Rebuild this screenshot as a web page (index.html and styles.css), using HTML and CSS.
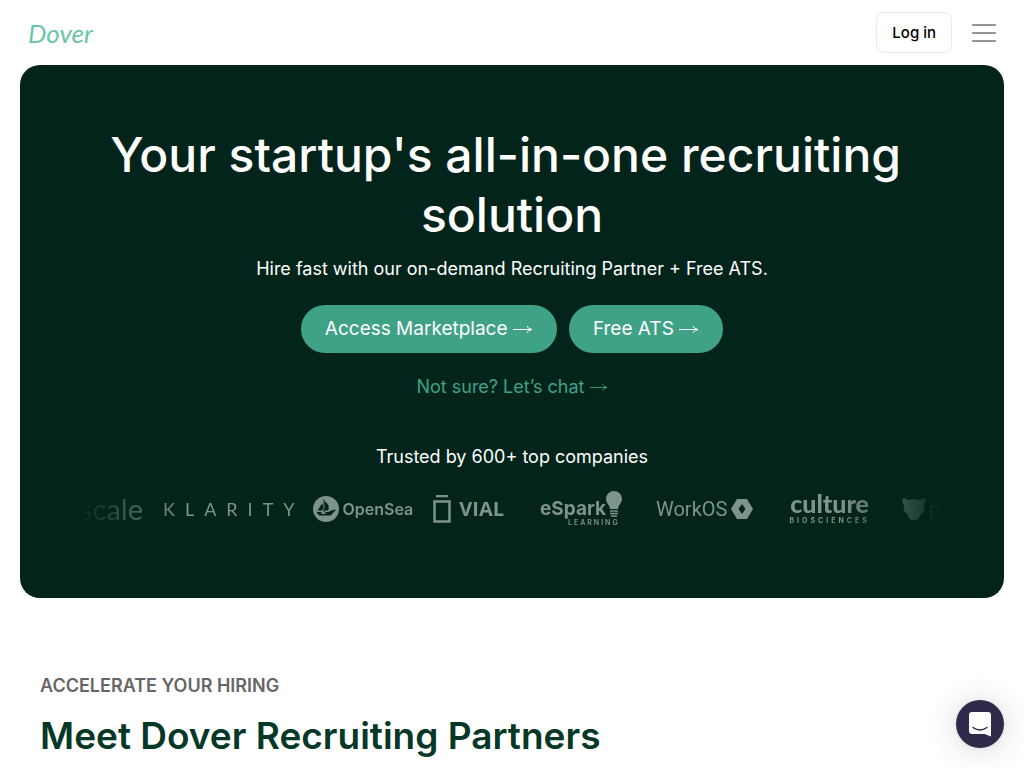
FILE: index.html
```html
<!DOCTYPE html>
<html lang="en">
<head>
    <meta charset="UTF-8">
    <meta name="viewport" content="width=device-width, initial-scale=1.0">
    <title>Dover</title>
    <link rel="stylesheet" href="styles.css">
</head>
<body>

    <header class="navbar">
        <a href="#" class="brand">Dover</a>
        <div class="nav-actions">
            <a href="#" class="login-button">Log in</a>
            <button class="menu-button" aria-label="Menu">
                <svg width="24" height="20" viewBox="0 0 24 20">
                    <path d="M0 2h24M0 10h24M0 18h24" stroke="#949494" stroke-width="2"></path>
                </svg>
            </button>
        </div>
    </header>

    <main>
        <section class="hero">
            <h1>Your startup's all-in-one recruiting&nbsp; solution</h1>
            <p class="hero-text">Hire fast with our on-demand Recruiting Partner + Free ATS.</p>
            <div class="hero-buttons">
                <a href="#" class="cta-button">Access Marketplace
                    <svg class="arrow" width="20" height="12" viewBox="0 0 20 12"><path d="M0 6.500h18M14 3q1 3 5 3.500q-4 .5-5 3.500"></path></svg>
                </a>
                <a href="#" class="cta-button">Free ATS
                    <svg class="arrow" width="20" height="12" viewBox="0 0 20 12"><path d="M0 6.500h18M14 3q1 3 5 3.500q-4 .5-5 3.500"></path></svg>
                </a>
            </div>
            <a href="#" class="chat-link">Not sure? Let’s chat
                <svg class="arrow" width="18" height="12" viewBox="0 0 20 12"><path d="M0 6.500h18M14 3q1 3 5 3.500q-4 .5-5 3.500"></path></svg>
            </a>

            <p class="trusted">Trusted by 600+ top companies</p>
            <div class="logos">
                <div class="logo scale">scale</div>
                <div class="logo klarity">KLARITY</div>
                <div class="logo opensea">
                    <svg width="26" height="26" viewBox="0 0 26 26">
                        <circle cx="13" cy="13" r="13" fill="currentColor"></circle>
                        <path d="M4.500 14.500 9 7.500q2 3.500.3 7zM11 5c4 2 6 5.500 4 9.500h-4q2-5 0-9.500zM3.500 16h5v2h4v-2h3l2-1.300 5-1.200v1.300l-1.800 1.200c-1.500 2.500-2.500 3.600-5 3.600H8.500c-3 0-5-2-5-5.600z" fill="#03241b"></path>
                        <path d="M11 3.500v13" stroke="#03241b" stroke-width="1"></path>
                    </svg>
                    <span>OpenSea</span>
                </div>
                <div class="logo vial">
                    <svg width="18" height="28" viewBox="0 0 18 28">
                        <path d="M3 1h12M1.500 6.500h15v20h-15z" fill="none" stroke="currentColor" stroke-width="2.500"></path>
                    </svg>
                    <span>VIAL</span>
                </div>
                <div class="logo espark">
                    <div class="espark-top">
                        <span class="espark-name">eSpark</span>
                        <svg width="16" height="27" viewBox="0 0 16 27">
                            <path d="M8 0a8 8 0 0 0-8 8c0 4 3.500 5.500 4 10h8c.5-4.500 4-6 4-10a8 8 0 0 0-8-8z" fill="currentColor"></path>
                            <path d="M4 20h8M4 22.500h8M5 25h6" stroke="currentColor" stroke-width="1.500"></path>
                        </svg>
                    </div>
                    <span class="espark-sub">LEARNING</span>
                </div>
                <div class="logo workos">
                    <span>WorkOS</span>
                    <svg width="22" height="20" viewBox="0 0 22 20">
                        <path d="M6 0h10l6 10-6 10H6L0 10zM11 5l-3.500 5 3.500 5 3.500-5z" fill="currentColor" fill-rule="evenodd"></path>
                    </svg>
                </div>
                <div class="logo culture">
                    <span class="culture-name">culture</span>
                    <span class="culture-sub">BIOSCIENCES</span>
                </div>
                <div class="logo bear">
                    <svg width="24" height="22" viewBox="0 0 24 22">
                        <path d="M1 5C-1 2 1-.5 3.500.5L6 2q6-1.500 12 0l2.500-1.500C23-.5 25 2 23 5l-1 2c.8 4 0 7-3 9-1.500 1-1 3-2.500 5-1 1.300-8 1.300-9 0C6 19 6.500 17 5 16c-3-2-3.800-5-3-9z" fill="currentColor"></path>
                    </svg>
                    <span>p</span>
                </div>
            </div>
        </section>

        <section class="partners">
            <p class="eyebrow">ACCELERATE YOUR HIRING</p>
            <h2>Meet Dover Recruiting Partners</h2>
        </section>
    </main>

    <button class="chat-button" aria-label="Open chat">
        <svg width="22" height="25" viewBox="0 0 22 25">
            <path d="M3 0h16a3 3 0 0 1 3 3v21.500L15.500 22H3a3 3 0 0 1-3-3V3a3 3 0 0 1 3-3z" fill="#fff"></path>
            <path d="M4 15.500q7 5 14 0" fill="none" stroke="#2d2a4a" stroke-width="1.500" stroke-linecap="round"></path>
        </svg>
    </button>

</body>
</html>
```
FILE: styles.css
```css
* {
    box-sizing: border-box;
}

body {
    margin: 0;
    font-family: Inter, Arial, sans-serif;
    background-color: #fff;
    color: #000;
}

h1, h2, p {
    margin: 0;
}

a {
    text-decoration: none;
}

/* Navbar */
.navbar {
    display: flex;
    justify-content: space-between;
    align-items: center;
    padding: 12px 28px;
}

.brand {
    font-family: Lato, sans-serif;
    font-size: 26px;
    font-style: italic;
    line-height: 32px;
    color: #6cc5a9;
}

.nav-actions {
    display: flex;
    align-items: center;
    gap: 20px;
}

.login-button {
    padding: 8px 15px;
    border: 1px solid #eaeaea;
    border-radius: 8px;
    font-size: 15px;
    font-weight: 500;
    line-height: 23px;
    color: #000;
}

.menu-button {
    display: flex;
    padding: 0;
    border: none;
    background: none;
    cursor: pointer;
}

/* Hero */
.hero {
    display: flex;
    flex-direction: column;
    align-items: center;
    margin: 0 20px;
    padding: 60px 60px 69px;
    border-radius: 20px;
    background-color: #03241b;
    color: #fff;
    text-align: center;
}

.hero h1 {
    max-width: 860px;
    font-size: 48px;
    font-weight: 500;
    line-height: 60px;
}

.hero-text,
.trusted,
.chat-link {
    font-size: 18px;
    line-height: 26px;
}

.hero-text {
    margin-top: 11px;
}

.hero-buttons {
    display: flex;
    flex-wrap: wrap;
    justify-content: center;
    gap: 12px;
    margin-top: 23px;
}

.cta-button {
    padding: 10px 24px;
    border-radius: 24px;
    background-color: #3fa286;
    font-size: 19px;
    line-height: 28px;
    color: #fff;
}

.arrow {
    fill: none;
    stroke: currentColor;
}

.chat-link {
    margin-top: 21px;
    color: #3fa286;
}

.trusted {
    margin-top: 44px;
}

/* Logo strip */
.logos {
    display: flex;
    align-items: center;
    align-self: stretch;
    gap: 20px;
    height: 40px;
    margin-top: 19px;
    overflow: hidden;
    color: #7d938c;
    white-space: nowrap;
    mask-image: linear-gradient(to right, transparent, #000 12%, #000 88%, transparent);
}

.logo {
    display: flex;
    flex: none;
    align-items: center;
    line-height: 24px;
}

.scale {
    font-family: Lato, sans-serif;
    font-size: 29px;
}

.klarity {
    margin-right: -12px;
    font-family: Lato, sans-serif;
    font-size: 18px;
    letter-spacing: 10px;
}

.opensea {
    gap: 4px;
    font-size: 16px;
    font-weight: 600;
}

.vial {
    gap: 8px;
    padding-right: 16px;
    font-family: "Open Sans", sans-serif;
    font-size: 20px;
    font-weight: 700;
}

.espark {
    flex-direction: column;
    align-items: flex-start;
    padding-right: 14px;
}

.espark-top {
    display: flex;
    align-items: flex-end;
}

.espark-name {
    padding-bottom: 1px;
    font-size: 19px;
    font-weight: 700;
    line-height: 16px;
}

.espark-sub {
    padding-left: 28px;
    font-size: 7px;
    font-weight: 600;
    line-height: 10px;
    letter-spacing: 2px;
}

.workos {
    gap: 4px;
    padding-right: 16px;
    font-family: Roboto, sans-serif;
    font-size: 20px;
}

.culture {
    flex-direction: column;
    padding-right: 12px;
}

.culture-name {
    font-family: Lato, sans-serif;
    font-size: 25px;
    font-weight: 900;
    line-height: 24px;
}

.culture-sub {
    font-size: 7px;
    font-weight: 700;
    line-height: 12px;
    letter-spacing: 3px;
}

.bear {
    gap: 3px;
    font-size: 20px;
}

/* Partners */
.partners {
    padding: 76px 40px 8px;
}

.eyebrow {
    font-size: 18px;
    font-weight: 600;
    line-height: 24px;
    color: #666;
}

.partners h2 {
    margin-top: 14px;
    font-size: 37px;
    font-weight: 600;
    line-height: 48px;
    color: #053827;
}

.chat-button {
    position: fixed;
    right: 20px;
    bottom: 20px;
    display: flex;
    align-items: center;
    justify-content: center;
    width: 48px;
    height: 48px;
    padding: 0;
    border: none;
    border-radius: 50%;
    background-color: #2d2a4a;
    box-shadow: 0 2px 32px rgba(0, 0, 0, 0.16), 0 1px 6px rgba(0, 0, 0, 0.06);
    cursor: pointer;
}
```
